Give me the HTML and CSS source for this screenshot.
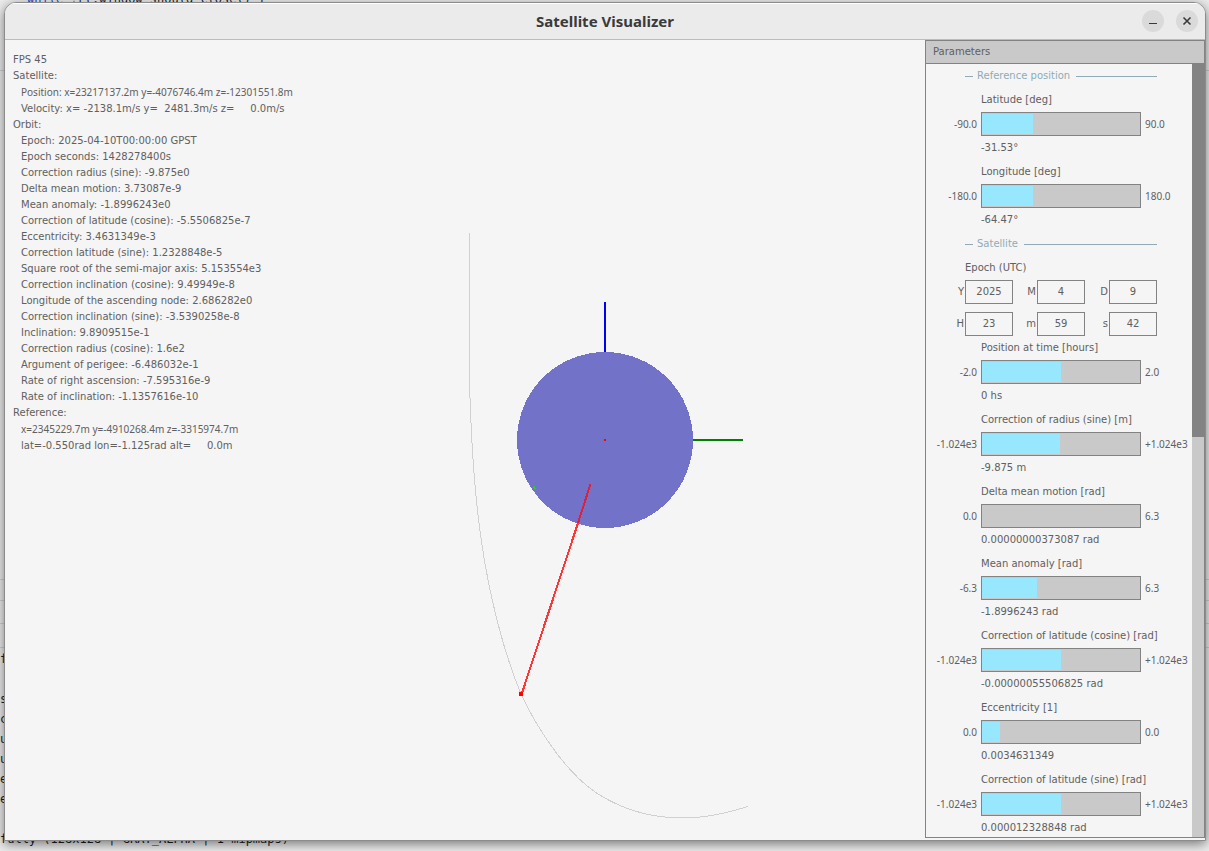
FILE: index.html
```html
<!DOCTYPE html>
<html lang="en">
<head>
<meta charset="utf-8">
<title>Satellite Visualizer</title>
<link rel="stylesheet" href="styles.css">
</head>
<body>
<div class="desktop" aria-hidden="true">
  <div class="rule rule-a"></div>
  <div class="rule rule-b"></div>
  <div class="rule rule-c"></div>
  <div class="rule rule-d"></div>
  <div class="rule rule-e"></div>
  <pre class="code code-top"><span class="keyword">while</span> !rl.window_should_close() {</pre>
  <pre class="code code-side">f

s
c
u
u
e
e

fully (128x128 | GRAY_ALPHA | 1 mipmaps)</pre>
</div>

<main class="window">
  <header class="titlebar">
    <h1 class="title">Satellite Visualizer</h1>
    <div class="window-buttons">
      <button class="window-button" type="button" aria-label="Minimize"><svg width="22" height="22" viewBox="0 0 22 22"><path d="M7 13.5h8" stroke="#3a3a3a" stroke-width="1"/></svg></button>
      <button class="window-button" type="button" aria-label="Close"><svg width="22" height="22" viewBox="0 0 22 22"><path d="M7.5 7.5l7 7M14.5 7.5l-7 7" stroke="#3a3a3a" stroke-width="1.6"/></svg></button>
    </div>
  </header>

  <div class="content">
    <section class="scene">
      <svg class="orbit-view" viewBox="5 40 920 800" preserveAspectRatio="xMidYMid meet" shape-rendering="crispEdges" role="img" aria-label="Satellite orbit">
        <path d="M469.500 233V379C471 440 475 500 482 545C489 593 503 651 521 694C534 722 562 769 595 792C619 808 648 818 683 818C706 818 727 813 748 806.500" fill="none" stroke="#d0d0d0"/>
        <path d="M605 302V352" stroke="#0000f5" stroke-width="2"/>
        <path d="M693 440H743" stroke="#008000" stroke-width="2"/>
        <circle cx="605" cy="440" r="88" fill="#7272c8"/>
        <rect x="604" y="439" width="2" height="2" fill="#f00020"/>
        <g fill="#32cd32">
          <rect x="534" y="486" width="1" height="3"/>
          <rect x="533" y="487" width="2" height="1"/>
          <rect x="535" y="488" width="1" height="1"/>
        </g>
        <path d="M590.500 484L578 523" stroke="#e02038" stroke-width="2"/>
        <path d="M578 523L522 693" stroke="#ff3636" stroke-width="2"/>
        <path d="M519 692h4v4h-4z" fill="#ff0000"/>
      </svg>
      <pre class="readout">FPS 45
Satellite:
<span class="indent vector">Position: x=23217137.2m y=-4076746.4m z=-12301551.8m</span>
<span class="indent">Velocity: x= -2138.1m/s y=  2481.3m/s z=     0.0m/s</span>
Orbit:
<span class="indent">Epoch: 2025-04-10T00:00:00 GPST</span>
<span class="indent">Epoch seconds: 1428278400s</span>
<span class="indent">Correction radius (sine): -9.875e0</span>
<span class="indent">Delta mean motion: 3.73087e-9</span>
<span class="indent">Mean anomaly: -1.8996243e0</span>
<span class="indent">Correction of latitude (cosine): -5.5506825e-7</span>
<span class="indent">Eccentricity: 3.4631349e-3</span>
<span class="indent">Correction latitude (sine): 1.2328848e-5</span>
<span class="indent">Square root of the semi-major axis: 5.153554e3</span>
<span class="indent">Correction inclination (cosine): 9.49949e-8</span>
<span class="indent">Longitude of the ascending node: 2.686282e0</span>
<span class="indent">Correction inclination (sine): -3.5390258e-8</span>
<span class="indent">Inclination: 9.8909515e-1</span>
<span class="indent">Correction radius (cosine): 1.6e2</span>
<span class="indent">Argument of perigee: -6.486032e-1</span>
<span class="indent">Rate of right ascension: -7.595316e-9</span>
<span class="indent">Rate of inclination: -1.1357616e-10</span>
Reference:
<span class="indent vector">x=2345229.7m y=-4910268.4m z=-3315974.7m</span>
<span class="indent">lat=-0.550rad lon=-1.125rad alt=     0.0m</span></pre>
    </section>

    <aside class="panel">
      <h2 class="panel-title">Parameters</h2>
      <div class="panel-main">
        <form class="fields">
          <h3 class="group">Reference position</h3>
          <div class="param">
            <label class="name" for="lat">Latitude [deg]</label>
            <span class="min">-90.0</span>
            <input class="slider" id="lat" type="range" min="-90" max="90" step="any" value="-31.53" style="--fill:51px">
            <span class="max">90.0</span>
            <output class="value" for="lat">-31.53°</output>
          </div>
          <div class="param">
            <label class="name" for="lon">Longitude [deg]</label>
            <span class="min">-180.0</span>
            <input class="slider" id="lon" type="range" min="-180" max="180" step="any" value="-64.47" style="--fill:51px">
            <span class="max">180.0</span>
            <output class="value" for="lon">-64.47°</output>
          </div>
          <h3 class="group">Satellite</h3>
          <div class="epoch-title">Epoch (UTC)</div>
          <div class="epoch">
            <label class="part">Y<input class="box" type="text" value="2025"></label>
            <label class="part">M<input class="box" type="text" value="4"></label>
            <label class="part">D<input class="box" type="text" value="9"></label>
            <label class="part">H<input class="box" type="text" value="23"></label>
            <label class="part">m<input class="box" type="text" value="59"></label>
            <label class="part">s<input class="box" type="text" value="42"></label>
          </div>
          <div class="param">
            <label class="name" for="time">Position at time [hours]</label>
            <span class="min">-2.0</span>
            <input class="slider" id="time" type="range" min="-2" max="2" step="any" value="0" style="--fill:79px">
            <span class="max">2.0</span>
            <output class="value" for="time">0 hs</output>
          </div>
          <div class="param">
            <label class="name" for="crs">Correction of radius (sine) [m]</label>
            <span class="min">-1.024e3</span>
            <input class="slider" id="crs" type="range" min="-1024" max="1024" step="any" value="-9.875" style="--fill:78px">
            <span class="max">+1.024e3</span>
            <output class="value" for="crs">-9.875 m</output>
          </div>
          <div class="param">
            <label class="name" for="dn">Delta mean motion [rad]</label>
            <span class="min">0.0</span>
            <input class="slider" id="dn" type="range" min="0" max="6.3" step="any" value="0" style="--fill:0px">
            <span class="max">6.3</span>
            <output class="value" for="dn">0.00000000373087 rad</output>
          </div>
          <div class="param">
            <label class="name" for="m0">Mean anomaly [rad]</label>
            <span class="min">-6.3</span>
            <input class="slider" id="m0" type="range" min="-6.3" max="6.3" step="any" value="-1.8996243" style="--fill:55px">
            <span class="max">6.3</span>
            <output class="value" for="m0">-1.8996243 rad</output>
          </div>
          <div class="param">
            <label class="name" for="cuc">Correction of latitude (cosine) [rad]</label>
            <span class="min">-1.024e3</span>
            <input class="slider" id="cuc" type="range" min="-1024" max="1024" step="any" value="0" style="--fill:79px">
            <span class="max">+1.024e3</span>
            <output class="value" for="cuc">-0.00000055506825 rad</output>
          </div>
          <div class="param">
            <label class="name" for="ecc">Eccentricity [1]</label>
            <span class="min">0.0</span>
            <input class="slider" id="ecc" type="range" min="0" max="0.03" step="any" value="0.0034631349" style="--fill:18px">
            <span class="max">0.0</span>
            <output class="value" for="ecc">0.0034631349</output>
          </div>
          <div class="param">
            <label class="name" for="cus">Correction of latitude (sine) [rad]</label>
            <span class="min">-1.024e3</span>
            <input class="slider" id="cus" type="range" min="-1024" max="1024" step="any" value="0" style="--fill:79px">
            <span class="max">+1.024e3</span>
            <output class="value" for="cus">0.000012328848 rad</output>
          </div>
        </form>
        <div class="scrollbar"><div class="thumb" style="height:48.200%"></div></div>
      </div>
    </aside>
  </div>
</main>
</body>
</html>
```
FILE: styles.css
```css
* {
  box-sizing: border-box;
}

body {
  margin: 0;
  height: 100vh;
  padding: 2px 3px 10px 4px;
  display: flex;
  position: relative;
  overflow: hidden;
  background: #ececec;
  color: #606060;
  font: 10px/16px "DejaVu Sans", sans-serif;
}

/* Editor and terminal that sit behind the window */
.desktop {
  position: absolute;
  inset: 0;
}

.rule {
  position: absolute;
  left: 0;
  right: 0;
  height: 1px;
  background: #d0d0d0;
}

.rule-a { top: 70px; }
.rule-b { top: 579px; }
.rule-c { top: 600px; }
.rule-d { top: 623px; }
.rule-e { top: 647px; }

.code {
  position: absolute;
  margin: 0;
  color: #1c1c1c;
  font: 12px/20px "DejaVu Sans Mono", monospace;
}

.code-top {
  left: 27px;
  top: -11px;
}

.code-side {
  left: 0;
  top: 649px;
}

.keyword {
  color: #2c46c8;
}

.window {
  position: relative;
  flex: 1;
  display: flex;
  flex-direction: column;
  overflow: hidden;
  border: 1px solid #8c8c8c;
  border-radius: 12px 12px 0 0;
  background: #f5f5f5;
  box-shadow: 0 3px 12px rgba(0, 0, 0, 0.5);
}

.titlebar {
  display: grid;
  grid-template-columns: 1fr auto 1fr;
  align-items: center;
  height: 37px;
  padding-bottom: 2px;
  border-top: 1px solid #ffffff;
  border-bottom: 1px solid #bcbcbc;
  background: #ebebeb;
}

.title {
  grid-column: 2;
  margin: 0;
  color: #3a3a3a;
  font: 700 15px/20px "Noto Sans", "Open Sans", sans-serif;
}

.window-buttons {
  display: flex;
  justify-content: flex-end;
  gap: 12px;
  padding-right: 7px;
}

.window-button {
  display: grid;
  width: 22px;
  height: 22px;
  padding: 0;
  border: 0;
  border-radius: 50%;
  background: #dadada;
}

.content {
  flex: 1;
  display: flex;
  min-height: 0;
}

.scene {
  position: relative;
  flex: 1;
  min-width: 0;
}

.orbit-view {
  position: absolute;
  inset: 0;
  width: 100%;
  height: 100%;
}

.readout {
  position: relative;
  margin: 0;
  padding: 12px 8px;
  font: inherit;
}

.indent {
  padding-left: 8px;
}

.vector,
.min,
.max {
  font-family: "Noto Sans", sans-serif;
}

.panel {
  display: flex;
  flex-direction: column;
  width: 280px;
  margin-bottom: 2px;
  border: 1px solid #838383;
}

.panel-title {
  margin: 0;
  padding: 0 7px;
  border-bottom: 1px solid #838383;
  background: #c9c9c9;
  font: inherit;
  line-height: 22px;
}

.panel-main {
  flex: 1;
  display: flex;
  min-height: 0;
}

.fields {
  flex: 1;
  min-width: 0;
  overflow: hidden;
  line-height: 24px;
  white-space: nowrap;
}

.group {
  display: flex;
  align-items: center;
  gap: 4px;
  margin: 0 35px 0 39px;
  color: #90abb5;
  font: inherit;
}

.group::before,
.group::after {
  content: "";
  height: 1px;
  background: #90abb5;
}

.group::before {
  width: 8px;
}

.group::after {
  flex: 1;
  margin-left: 2px;
}

.param {
  display: grid;
  grid-template-columns: 51px 160px 1fr;
  grid-auto-rows: 24px;
  column-gap: 4px;
}

.name,
.value {
  grid-column: 2 / 4;
}

.min {
  grid-column: 1;
  text-align: right;
}

.slider {
  appearance: none;
  width: 100%;
  height: 24px;
  margin: 0;
  padding: 1px 0;
  border: 1px solid #838383;
  background: linear-gradient(#97e8ff, #97e8ff) content-box no-repeat 0 0 / var(--fill) 100%, #c9c9c9;
}

.slider::-webkit-slider-thumb {
  appearance: none;
  width: 1px;
  height: 20px;
  background: transparent;
}

.epoch-title {
  margin-left: 39px;
}

.epoch {
  display: grid;
  grid-template-columns: repeat(3, 72px);
  row-gap: 8px;
  margin-left: 15px;
}

.part {
  display: flex;
  justify-content: flex-end;
  gap: 1px;
}

.box {
  width: 48px;
  height: 24px;
  padding: 0;
  border: 1px solid #838383;
  background: transparent;
  color: inherit;
  font: inherit;
  text-align: center;
}

.scrollbar {
  width: 12px;
  background: #c9c9c9;
}

.thumb {
  background: #838383;
}
```
